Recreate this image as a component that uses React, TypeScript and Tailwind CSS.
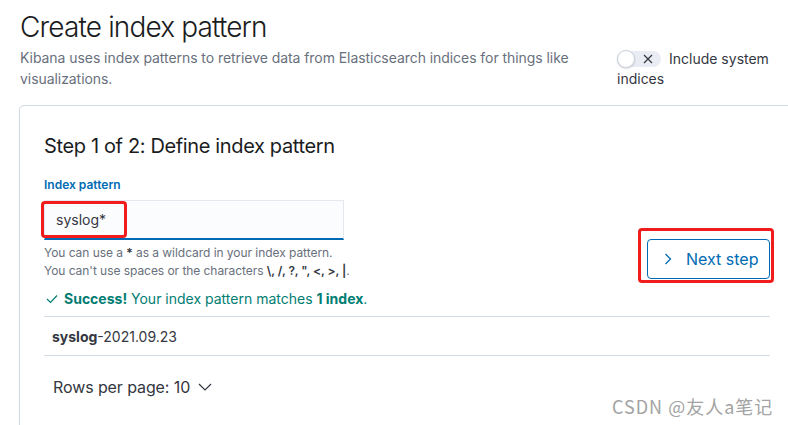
import React from "react";

export default function App() {
  return (
    <div className="relative w-[788px] h-[425px] overflow-hidden bg-white font-[family-name:Inter,sans-serif] text-[#343741]">
      <div className="pl-[20px] pt-[10px]">
        <h1 className="text-[28px] leading-[34px] font-light tracking-[-0.85px] text-[#1a1c21]">Create index pattern</h1>
        <div className="flex items-start mt-[3px]">
          <p className="w-[580px] text-[14px] leading-[21px] tracking-[-0.06px] text-[#69707d]">
            Kibana uses index patterns to retrieve data from Elasticsearch indices for things like visualizations.
          </p>
          <div className="ml-[17px] w-[165px] mt-[2px] text-[14px] leading-[20px] text-[#343741]">
            <span className="relative inline-block align-top w-[44px] h-[20px] mr-[8px]">
              <span className="absolute left-0 top-[2px] w-[44px] h-[16px] rounded-full bg-[#e9edf3]" />
              <span className="absolute left-0 top-[1px] w-[18px] h-[18px] rounded-full bg-white border border-[#c9d0dc] shadow-[0_1px_2px_rgba(0,0,0,0.15)]" />
              <svg className="absolute left-[26px] top-[5px]" width="10" height="10" viewBox="0 0 10 10">
                <path d="M1 1 L9 9 M9 1 L1 9" stroke="#343741" strokeWidth="1.2" fill="none" />
              </svg>
            </span>
            Include system indices
          </div>
        </div>
      </div>

      <div className="ml-[19px] mt-[16px] w-[776px] h-[400px] border border-[#d3dae6] rounded-[5px] shadow-[0_1px_3px_rgba(0,0,0,0.04)] px-[24px] pt-[26px]">
        <h2 className="text-[20px] leading-[28px] font-normal tracking-[-0.36px] text-[#1a1c21]">Step 1 of 2: Define index pattern</h2>
        <div className="flex items-end justify-between mt-[16px]">
          <div className="w-[400px]">
            <label className="block text-[12px] leading-[18px] font-semibold text-[#006bb4]">Index pattern</label>
            <div className="mt-[6px] w-[300px] h-[40px] bg-[#fbfcfd] border border-[#e6e7ef] border-b-2 border-b-[#006bb4] flex items-center pl-[11px] text-[14px] text-[#343741]">
              syslog*
            </div>
            <div className="mt-[4px] text-[12px] leading-[18px] tracking-[-0.05px] text-[#69707d]">
              <div>
                You can use a <strong className="font-semibold text-[#343741]">*</strong> as a wildcard in your index pattern.
              </div>
              <div>
                You can't use spaces or the characters{" "}
                <strong className="font-semibold text-[#343741]">\, /, ?, ", &lt;, &gt;, |</strong>.
              </div>
            </div>
          </div>
          <button className="w-[123px] h-[40px] mb-[1px] rounded-[4px] border border-[#006bb4] text-[#006bb4] text-[16px] flex items-center pl-[16px] gap-[14px] bg-white">
            <svg width="8" height="12" viewBox="0 0 8 12">
              <path d="M1.5 1 L6.5 6 L1.5 11" stroke="#006bb4" strokeWidth="1.3" fill="none" />
            </svg>
            Next step
          </button>
        </div>

        <div className="mt-[8px] flex items-center text-[14px] leading-[21px] text-[#017d73]">
          <svg className="ml-[2px] mr-[6px]" width="12" height="10" viewBox="0 0 12 10">
            <path d="M1 5 L4.5 8.5 L11 1.5" stroke="#017d73" strokeWidth="1.2" fill="none" />
          </svg>
          <span>
            <strong className="font-bold">Success!</strong> Your index pattern matches{" "}
            <strong className="font-bold">1 index</strong>.
          </span>
        </div>

        <div className="mt-[7px] h-[40px] border-t border-b border-[#d3dae6] flex items-center pl-[8px] text-[14px] text-[#343741]">
          <span>
            <strong className="font-bold">syslog</strong>-2021.09.23
          </span>
        </div>

        <div className="mt-[20px] pl-[9px] flex items-center gap-[8px] text-[16px] leading-[22px] tracking-[-0.1px] text-[#343741]">
          <span>Rows per page: 10</span>
          <svg width="14" height="8" viewBox="0 0 14 8">
            <path d="M1 1 L7 7 L13 1" stroke="#343741" strokeWidth="1.2" fill="none" />
          </svg>
        </div>
      </div>

      <div className="absolute left-[41px] top-[201px] w-[86px] h-[37px] border-[3px] border-[#f11c1c] rounded-[4px]" />
      <div className="absolute left-[638px] top-[228px] w-[136px] h-[55px] border-[3px] border-[#f11c1c] rounded-[4px]" />

      <div className="absolute left-[612px] top-[394px] text-[18px] leading-[24px] tracking-[1px] text-[#a3a3a3] font-[family-name:'Noto_Sans_CJK_SC',sans-serif]">
        CSDN @友人a笔记
      </div>
    </div>
  );
}
